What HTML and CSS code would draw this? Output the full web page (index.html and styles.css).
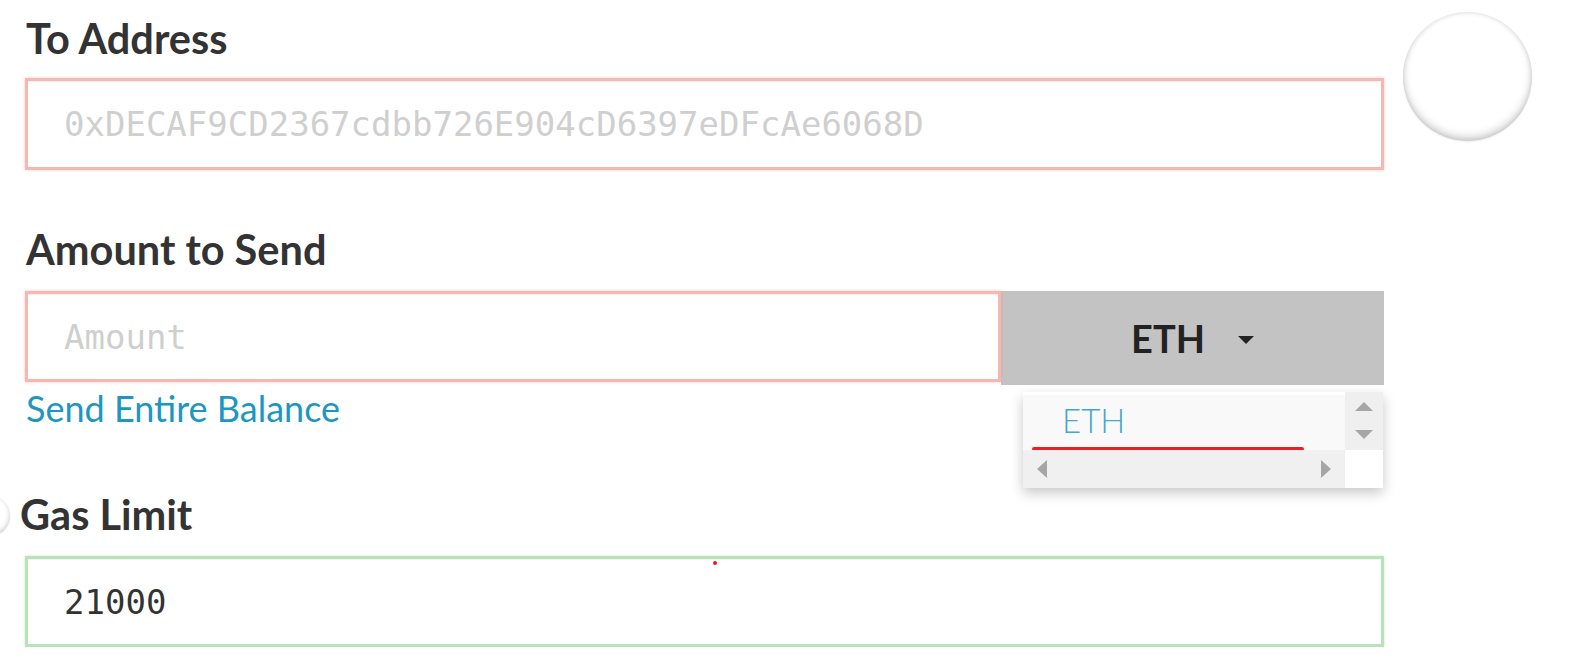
FILE: index.html
```html
<!DOCTYPE html>
<html>
<head>
<meta charset="utf-8">
<link rel="stylesheet" href="styles.css">
</head>
<body>
<div class="page">
  <div class="form">
    <div class="group">
      <label class="label">To Address</label>
      <div class="input invalid"><span class="placeholder">0xDECAF9CD2367cdbb726E904cD6397eDFcAe6068D</span></div>
    </div>
    <div class="group amount-group">
      <label class="label">Amount to Send</label>
      <div class="amount-row">
        <div class="input invalid amount"><span class="placeholder">Amount</span></div>
        <div class="unit-btn"><span>ETH</span><span class="caret"></span></div>
      </div>
      <a class="link">Send Entire Balance</a>
      <div class="dropdown">
        <div class="dd-main">
          <div class="dd-list">
            <div class="dd-item">ETH</div>
            <div class="dd-underline"></div>
          </div>
          <div class="vscroll">
            <span class="tri up"></span>
            <span class="tri down"></span>
          </div>
        </div>
        <div class="dd-bottom">
          <div class="hscroll">
            <span class="tri left"></span>
            <span class="tri right"></span>
          </div>
          <div class="corner"></div>
        </div>
      </div>
    </div>
    <div class="group gas-group">
      <label class="label gas-label">Gas Limit</label>
      <div class="input valid"><span class="value">21000</span><span class="dot"></span></div>
    </div>
  </div>
  <div class="identicon"></div>
</div>
</body>
</html>
```

FILE: styles.css
```css
html, body {
  margin: 0;
  padding: 0;
  background: #fff;
  overflow: hidden;
}
.page {
  display: flex;
  align-items: flex-start;
  gap: 19px;
  padding-left: 25px;
  font-family: Lato, "Open Sans", sans-serif;
}
.form {
  width: 1359px;
}
.label {
  display: block;
  font-weight: 700;
  font-size: 41.5px;
  line-height: 48px;
  color: #333;
  padding-left: 1px;
}
.group:first-child .label {
  margin-top: 14px;
}
.input {
  box-sizing: border-box;
  height: 92px;
  margin-top: 16px;
  border: 3px solid #f7b6b0;
  box-shadow: inset 0 1px 1px rgba(0,0,0,.06), 0 0 3px rgba(245,140,130,.45);
  display: flex;
  align-items: center;
  padding-left: 36px;
  font-family: "DejaVu Sans Mono", monospace;
  font-size: 34px;
  position: relative;
}
.placeholder { color: #cfcfcf; }
.input.valid {
  border-color: #b8e2b8;
  box-shadow: inset 0 1px 1px rgba(0,0,0,.06), 0 0 3px rgba(140,210,140,.45);
  height: 91px;
}
.value { color: #333; }
.dot {
  position: absolute;
  left: 685px;
  top: 2px;
  width: 4px;
  height: 4px;
  border-radius: 50%;
  background: #e81c1c;
}
.amount-group {
  position: relative;
  margin-top: 55px;
}
.amount-row {
  display: flex;
  align-items: flex-start;
  margin-top: 18px;
}
.amount-row .input.amount {
  margin-top: 0;
  width: 976px;
  height: 91px;
}
.unit-btn {
  flex: 1;
  height: 94px;
  background: #c3c3c3;
  display: flex;
  align-items: center;
  justify-content: center;
  gap: 33px;
  font-weight: 700;
  font-size: 38px;
  color: #222;
  box-sizing: border-box;
}
.caret {
  width: 0;
  height: 0;
  border-left: 8px solid transparent;
  border-right: 8px solid transparent;
  border-top: 8px solid #222;
  margin-top: 4px;
}
.link {
  display: block;
  font-size: 36px;
  line-height: 40px;
  color: #1e96c2;
  margin-top: 3px;
  padding-left: 1px;
}
.dropdown {
  position: absolute;
  left: 998px;
  top: 167px;
  width: 360px;
  box-shadow: 0 5px 12px rgba(0,0,0,.22);
  background: #fff;
}
.dd-main {
  display: flex;
  height: 58px;
}
.dd-list {
  flex: 1;
  background: #f9f9f9;
  position: relative;
  margin-top: 3px;
}
.dd-item {
  font-weight: 300;
  font-size: 33px;
  line-height: 40px;
  color: #46a7cf;
  padding-left: 39px;
  margin-top: 5px;
}
.dd-underline {
  position: absolute;
  left: 9px;
  top: 52px;
  width: 272px;
  height: 4px;
  border-radius: 2px;
  background: #e8202a;
}
.vscroll {
  width: 38px;
  background: #efefef;
  position: relative;
}
.dd-bottom {
  display: flex;
  height: 38px;
}
.hscroll {
  flex: 1;
  background: #f0f0f0;
  position: relative;
}
.corner {
  width: 38px;
  background: #fff;
}
.tri {
  position: absolute;
  width: 0;
  height: 0;
}
.tri.up {
  left: 10px;
  top: 10px;
  border-left: 9px solid transparent;
  border-right: 9px solid transparent;
  border-bottom: 9px solid #a6a6a6;
}
.tri.down {
  left: 10px;
  top: 38px;
  border-left: 9px solid transparent;
  border-right: 9px solid transparent;
  border-top: 9px solid #a6a6a6;
}
.tri.left {
  left: 14px;
  top: 10px;
  border-top: 9px solid transparent;
  border-bottom: 9px solid transparent;
  border-right: 10px solid #a6a6a6;
}
.tri.right {
  left: 298px;
  top: 10px;
  border-top: 9px solid transparent;
  border-bottom: 9px solid transparent;
  border-left: 10px solid #a6a6a6;
}
.gas-group {
  margin-top: 62px;
}
.gas-label {
  margin-left: -6px;
  position: relative;
}
.gas-label::before {
  content: "";
  position: absolute;
  left: -49px;
  top: 6px;
  width: 40px;
  height: 40px;
  border-radius: 50%;
  background: #fff;
  box-shadow: inset 0 -2px 5px rgba(0,0,0,.2), 0 0 2px rgba(0,0,0,.1);
}
.gas-group .input {
  margin-top: 18px;
}
.identicon {
  flex: none;
  width: 129px;
  height: 129px;
  margin-top: 12px;
  border-radius: 50%;
  background: #fff;
  box-shadow: inset 0 -4px 8px rgba(0,0,0,.18), inset 0 0 5px rgba(0,0,0,.12), 0 1px 2px rgba(0,0,0,.08);
}
```
